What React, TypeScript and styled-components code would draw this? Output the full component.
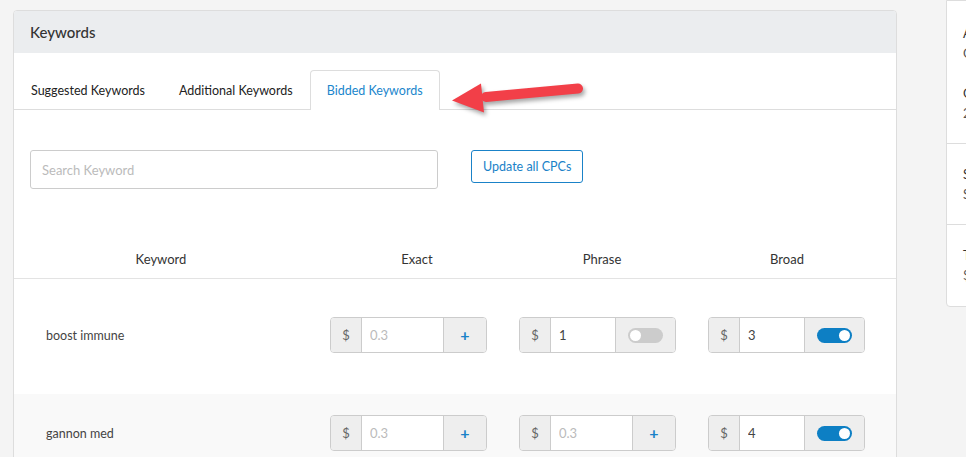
import React from 'react';
import styled, { createGlobalStyle } from 'styled-components';

const GlobalStyle = createGlobalStyle`
	html, body {
		margin: 0;
		padding: 0;
		background: #f4f4f4;
		font-family: Lato, 'Open Sans', sans-serif;
		color: #333;
		overflow: hidden;
	}
	* {
		box-sizing: border-box;
	}
`;

const Page = styled.div`
	position: relative;
	display: flex;
	align-items: flex-start;
	width: 966px;
	height: 457px;
	overflow: hidden;
`;

const Main = styled.div`
	flex: none;
	width: 897px;
	padding: 10px 0 0 13px;
`;

const Card = styled.div`
	background: #fff;
	border: 1px solid #dddddd;
	border-radius: 4px;
	overflow: hidden;
	height: 480px;
`;

const CardHeader = styled.div`
	display: flex;
	align-items: center;
	height: 42px;
	padding-left: 16px;
	background: #ebedef;
	font-size: 15px;
	font-weight: 500;
	color: #333;
`;

const TabBar = styled.div`
	display: flex;
	align-items: flex-end;
	height: 57px;
	border-bottom: 1px solid #dddddd;
`;

const Tab = styled.div<{ $active?: boolean }>`
	display: flex;
	align-items: center;
	height: ${(p) => (p.$active ? '40px' : '39px')};
	padding: 0 16px;
	margin-bottom: ${(p) => (p.$active ? '-1px' : '0')};
	font-size: 12.5px;
	color: ${(p) => (p.$active ? '#1b86cc' : '#222')};
	background: #fff;
	border: 1px solid ${(p) => (p.$active ? '#dddddd' : 'transparent')};
	border-bottom: none;
	border-radius: 4px 4px 0 0;
	padding-bottom: ${(p) => (p.$active ? '1px' : '0')};
`;

const Toolbar = styled.div`
	display: flex;
	align-items: flex-start;
	gap: 33px;
	padding: 40px 16px 0;
`;

const SearchInput = styled.input`
	width: 408px;
	height: 39px;
	padding: 0 11px;
	border: 1px solid #cccccc;
	border-radius: 3px;
	font-family: inherit;
	font-size: 13px;
	color: #444;
	outline: none;
	&::placeholder {
		color: #bbbbbb;
	}
`;

const OutlineButton = styled.button`
	height: 33px;
	padding: 0 11px;
	background: #fff;
	border: 1px solid #1a82c8;
	border-radius: 3px;
	font-family: inherit;
	font-size: 12.5px;
	color: #1a82c8;
`;

const HeadRow = styled.div`
	display: grid;
	grid-template-columns: 294px 218px 152px 1fr;
	align-items: center;
	height: 40px;
	margin-top: 50px;
	border-bottom: 1px solid #e3e3e3;
	font-size: 13px;
	color: #333;
	text-align: center;
`;

const Body = styled.div`
	padding-top: 17px;
`;

const Row = styled.div<{ $striped?: boolean }>`
	display: flex;
	align-items: center;
	gap: 32px;
	padding: 21px 0 41px 32px;
	background: ${(p) => (p.$striped ? '#f9f9f9' : '#fff')};
`;

const KeywordCell = styled.div`
	width: 252px;
	font-size: 12.5px;
	color: #444;
`;

const Group = styled.div`
	display: flex;
	width: 157px;
	height: 36px;
	border: 1px solid #cccccc;
	border-radius: 4px;
	overflow: hidden;
`;

const Prefix = styled.div`
	display: flex;
	align-items: center;
	justify-content: center;
	flex: none;
	width: 31px;
	background: #eeeeee;
	border-right: 1px solid #cccccc;
	font-size: 13px;
	color: #666;
`;

const Field = styled.input`
	flex: 1;
	min-width: 0;
	padding: 0 8px;
	border: none;
	outline: none;
	background: #fff;
	font-family: inherit;
	font-size: 13px;
	color: #444;
	&::placeholder {
		color: #bbbbbb;
	}
`;

const Addon = styled.div<{ $wide?: boolean }>`
	display: flex;
	align-items: center;
	justify-content: center;
	flex: none;
	width: ${(p) => (p.$wide ? '60px' : '43px')};
	background: #eeeeee;
	border-left: 1px solid #cccccc;
`;

const Plus = styled.span`
	font-size: 16px;
	font-weight: 700;
	line-height: 1;
	color: #1a82c8;
`;

const Toggle = styled.div<{ $on?: boolean }>`
	display: flex;
	align-items: center;
	justify-content: ${(p) => (p.$on ? 'flex-end' : 'flex-start')};
	width: 35px;
	height: 15px;
	padding: 0 2px;
	border-radius: 8px;
	background: ${(p) => (p.$on ? '#0d7fc4' : '#cccccc')};
`;

const Knob = styled.span`
	width: 11px;
	height: 11px;
	border-radius: 50%;
	background: #fff;
`;

const SidePanel = styled.div`
	flex: none;
	width: 220px;
	height: 307px;
	margin-left: 49px;
	background: #fff;
	border: 1px solid #dddddd;
	border-radius: 0 0 4px 4px;
	overflow: hidden;
	white-space: nowrap;
`;

const SideSection = styled.div<{ $first?: boolean }>`
	display: flex;
	flex-direction: column;
	gap: ${(p) => (p.$first ? '20px' : '0')};
	padding: ${(p) => (p.$first ? '22px' : '20px')} 16px 20px;
	border-bottom: 1px solid #dddddd;
	&:last-child {
		border-bottom: none;
	}
`;

const SideLabel = styled.div`
	font-size: 13px;
	line-height: 20px;
	color: #333;
`;

const SideValue = styled.div`
	font-size: 13px;
	line-height: 20px;
	color: #555;
`;

const Arrow = styled.svg`
	position: absolute;
	left: 0;
	top: 0;
	pointer-events: none;
	filter: drop-shadow(2px 3px 2px rgba(0, 0, 0, 0.35));
`;

type Bid = { value?: string; toggle?: boolean; on?: boolean };

interface KeywordRow {
	keyword: string;
	bids: Bid[];
}

const rows: KeywordRow[] = [
	{
		keyword: 'boost immune',
		bids: [{}, { value: '1', toggle: true, on: false }, { value: '3', toggle: true, on: true }],
	},
	{
		keyword: 'gannon med',
		bids: [{}, {}, { value: '4', toggle: true, on: true }],
	},
];

const BidInput: React.FC<{ bid: Bid }> = ({ bid }) => (
	<Group>
		<Prefix>$</Prefix>
		<Field readOnly placeholder="0.3" value={bid.value ?? ''} />
		<Addon $wide={bid.toggle}>
			{bid.toggle ? (
				<Toggle $on={bid.on}>
					<Knob />
				</Toggle>
			) : (
				<Plus>+</Plus>
			)}
		</Addon>
	</Group>
);

const App: React.FC = () => (
	<Page>
		<GlobalStyle />
		<Main>
			<Card>
				<CardHeader>Keywords</CardHeader>
				<TabBar>
					<Tab>Suggested Keywords</Tab>
					<Tab>Additional Keywords</Tab>
					<Tab $active>Bidded Keywords</Tab>
				</TabBar>
				<Toolbar>
					<SearchInput placeholder="Search Keyword" />
					<OutlineButton>Update all CPCs</OutlineButton>
				</Toolbar>
				<HeadRow>
					<div>Keyword</div>
					<div>Exact</div>
					<div>Phrase</div>
					<div>Broad</div>
				</HeadRow>
				<Body>
					{rows.map((r, i) => (
						<Row key={r.keyword} $striped={i % 2 === 1}>
							<KeywordCell>{r.keyword}</KeywordCell>
							{r.bids.map((b, j) => (
								<BidInput key={j} bid={b} />
							))}
						</Row>
					))}
				</Body>
			</Card>
		</Main>
		<SidePanel>
			<SideSection $first>
				<div>
					<SideLabel>Ad Group</SideLabel>
					<SideValue>Campaign Group 1</SideValue>
				</div>
				<div>
					<SideLabel>Created</SideLabel>
					<SideValue>2021-03-14</SideValue>
				</div>
			</SideSection>
			<SideSection>
				<SideLabel>Status</SideLabel>
				<SideValue>Scheduled</SideValue>
			</SideSection>
			<SideSection>
				<SideLabel>Total Budget</SideLabel>
				<SideValue>$500.00</SideValue>
			</SideSection>
		</SidePanel>
		<Arrow width="966" height="457" viewBox="0 0 966 457">
			<line x1="486" y1="97" x2="578" y2="88.5" stroke="#f23f48" strokeWidth="10" strokeLinecap="round" />
			<polygon points="452,100.5 481,83.5 484,112.5" fill="#f23f48" />
		</Arrow>
	</Page>
);

export default App;
